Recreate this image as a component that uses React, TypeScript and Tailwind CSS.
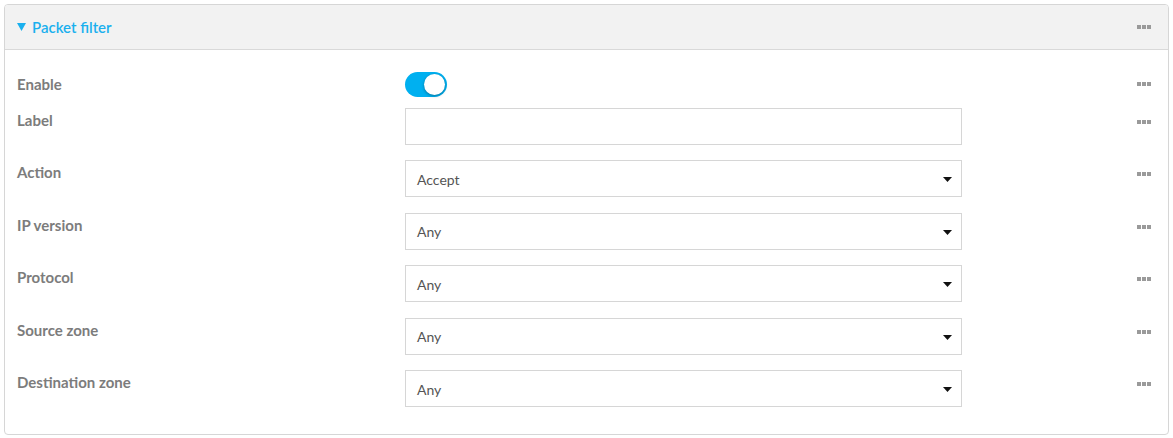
import React, { useState } from 'react';

const SELECTS = [
  { label: 'Action', value: 'Accept' },
  { label: 'IP version', value: 'Any' },
  { label: 'Protocol', value: 'Any' },
  { label: 'Source zone', value: 'Any' },
  { label: 'Destination zone', value: 'Any' },
];

function Dots() {
  return (
    <span className="flex gap-[1px]">
      <span className="w-[4px] h-[4px] bg-[#9a9a9a]" />
      <span className="w-[4px] h-[4px] bg-[#9a9a9a]" />
      <span className="w-[4px] h-[4px] bg-[#9a9a9a]" />
    </span>
  );
}

function Caret() {
  return (
    <svg width="9" height="5" viewBox="0 0 9 5" className="absolute right-[9px] top-[16px]">
      <path d="M0 0h9L4.5 5z" fill="#111" />
    </svg>
  );
}

export default function App() {
  const [enabled, setEnabled] = useState(true);
  const [label, setLabel] = useState('');

  return (
    <div className="p-[4px] bg-white w-[1173px] h-[438px]" style={{ fontFamily: 'Lato, "Liberation Sans", sans-serif' }}>
      <div className="w-[1165px] h-[431px] border border-[#d6d6d6] rounded-[4px] overflow-hidden">
        {/* Header */}
        <div className="h-[45px] bg-[#f2f2f2] border-b border-[#d9d9d9] flex items-center justify-between pl-[12px] pr-[17px]">
          <span className="text-[15px] font-semibold text-[#1ab0ee] flex items-center gap-[6px]">
            <svg width="9" height="8" viewBox="0 0 9 8">
              <path d="M0 0h9L4.5 8z" fill="#1ab0ee" />
            </svg>
            Packet filter
          </span>
          <Dots />
        </div>

        {/* Body */}
        <div className="pt-[22px] pl-[12px] pr-[17px]">
          {/* Enable */}
          <div className="flex h-[36px]">
            <div className="w-[388px] pt-[2px] text-[15px] font-bold text-[#7c7c7c] leading-[20px]">Enable</div>
            <button
              onClick={() => setEnabled(!enabled)}
              className={`relative w-[42px] h-[25px] rounded-full ${enabled ? 'bg-[#00b0f0]' : 'bg-[#cfcfcf]'}`}
            >
              <span
                className={`absolute top-[2px] w-[21px] h-[21px] rounded-full bg-white shadow-[0_1px_3px_rgba(0,0,0,0.35)] ${enabled ? 'left-[19px]' : 'left-[2px]'}`}
              />
            </button>
            <div className="flex-1 flex justify-end pt-[10px]">
              <Dots />
            </div>
          </div>

          {/* Label */}
          <div className="flex h-[52px]">
            <div className="w-[388px] pt-[2px] text-[15px] font-bold text-[#7c7c7c] leading-[20px]">Label</div>
            <input
              value={label}
              onChange={(e) => setLabel(e.target.value)}
              className="w-[557px] h-[37px] border border-[#d6d6d6] px-[11px] text-[14px] text-[#555] outline-none"
            />
            <div className="flex-1 flex justify-end pt-[12px]">
              <Dots />
            </div>
          </div>

          {SELECTS.map((s) => (
            <div key={s.label} className="flex h-[52.5px]">
              <div className="w-[388px] pt-[2px] text-[15px] font-bold text-[#7c7c7c] leading-[20px]">{s.label}</div>
              <div className="relative w-[557px] h-[37px] border border-[#d6d6d6] pl-[11px] flex items-center text-[14px] text-[#555] pt-[1px]">
                {s.value}
                <Caret />
              </div>
              <div className="flex-1 flex justify-end pt-[12px]">
                <Dots />
              </div>
            </div>
          ))}
        </div>
      </div>
    </div>
  );
}
